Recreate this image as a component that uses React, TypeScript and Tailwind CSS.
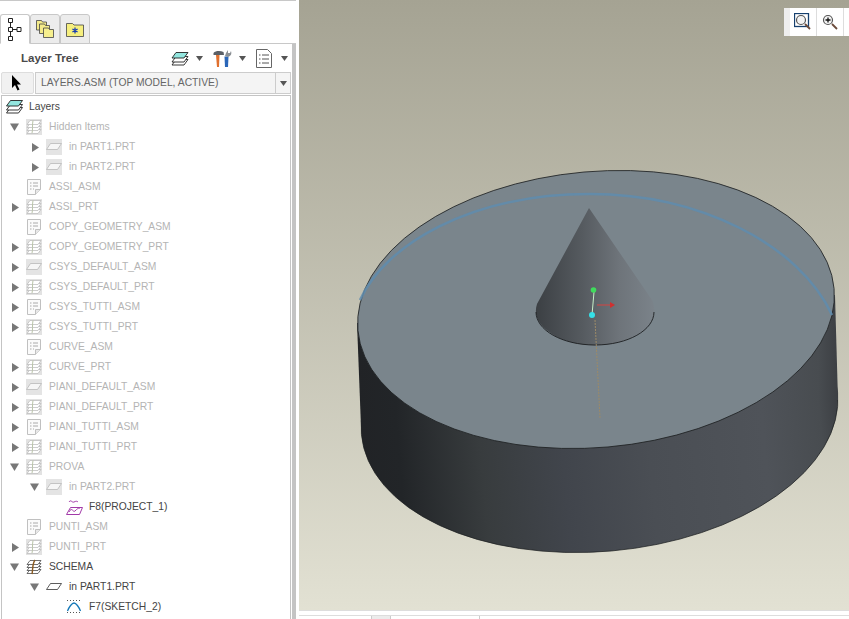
import React from "react";

type Kind = "sheet" | "plane" | "list" | "layers" | "project" | "sketch" | "schema";
type Row = { d: -1 | 0 | 1 | 2; a?: "open" | "closed"; k: Kind; t: string; dim?: boolean };

const rows: Row[] = [
  { d: -1, k: "layers", t: "Layers" },
  { d: 0, a: "open", k: "sheet", t: "Hidden Items", dim: true },
  { d: 1, a: "closed", k: "plane", t: "in PART1.PRT", dim: true },
  { d: 1, a: "closed", k: "plane", t: "in PART2.PRT", dim: true },
  { d: 0, k: "list", t: "ASSI_ASM", dim: true },
  { d: 0, a: "closed", k: "sheet", t: "ASSI_PRT", dim: true },
  { d: 0, k: "list", t: "COPY_GEOMETRY_ASM", dim: true },
  { d: 0, a: "closed", k: "sheet", t: "COPY_GEOMETRY_PRT", dim: true },
  { d: 0, a: "closed", k: "plane", t: "CSYS_DEFAULT_ASM", dim: true },
  { d: 0, a: "closed", k: "sheet", t: "CSYS_DEFAULT_PRT", dim: true },
  { d: 0, a: "closed", k: "list", t: "CSYS_TUTTI_ASM", dim: true },
  { d: 0, a: "closed", k: "sheet", t: "CSYS_TUTTI_PRT", dim: true },
  { d: 0, k: "list", t: "CURVE_ASM", dim: true },
  { d: 0, a: "closed", k: "sheet", t: "CURVE_PRT", dim: true },
  { d: 0, a: "closed", k: "plane", t: "PIANI_DEFAULT_ASM", dim: true },
  { d: 0, a: "closed", k: "sheet", t: "PIANI_DEFAULT_PRT", dim: true },
  { d: 0, a: "closed", k: "list", t: "PIANI_TUTTI_ASM", dim: true },
  { d: 0, a: "closed", k: "sheet", t: "PIANI_TUTTI_PRT", dim: true },
  { d: 0, a: "open", k: "sheet", t: "PROVA", dim: true },
  { d: 1, a: "open", k: "plane", t: "in PART2.PRT", dim: true },
  { d: 2, k: "project", t: "F8(PROJECT_1)" },
  { d: 0, k: "list", t: "PUNTI_ASM", dim: true },
  { d: 0, a: "closed", k: "sheet", t: "PUNTI_PRT", dim: true },
  { d: 0, a: "open", k: "schema", t: "SCHEMA" },
  { d: 1, a: "open", k: "plane", t: "in PART1.PRT" },
  { d: 2, k: "sketch", t: "F7(SKETCH_2)" },
];

const indent: Record<number, string> = { [-1]: "pl-[4px]", 0: "pl-[4px]", 1: "pl-[24px]", 2: "pl-[44px]" };

function Arrow({ a }: { a?: "open" | "closed" }) {
  if (!a) return <span className="w-[20px] shrink-0" />;
  return (
    <svg width="20" height="20" viewBox="0 0 20 20" className="shrink-0">
      {a === "open" ? <path d="M4 6.500h9l-4.500 7.500z" fill="#777" /> : <path d="M6 6l7 4.500-7 4.500z" fill="#777" />}
    </svg>
  );
}

function Stack({ w = 17 }: { w?: number }) {
  return (
    <svg width={w} height="16" viewBox="0 0 17 16">
      <path d="M4.500 8.500h12l-4 5.500H.5z" fill="#fff" stroke="#222" strokeWidth=".9" />
      <path d="M4.500 5.500h12l-4 5.500H.5z" fill="#fff" stroke="#222" strokeWidth=".9" />
      <path d="M4.500 1.500h12l-4 5.500H.5z" fill="#93e6df" stroke="#222" strokeWidth=".9" />
    </svg>
  );
}

function TreeIcon({ k, dim }: { k: Kind; dim?: boolean }) {
  const c = dim ? "#b8b8b8" : "#333";
  if (k === "layers") return <Stack />;
  if (k === "plane")
    return (
      <span className={`flex h-[16px] w-[16px] items-center justify-center ${dim ? "bg-[#e4e4e4]" : ""}`}>
        <svg width="16" height="16" viewBox="0 0 16 16">
          <path d="M4.500 4.500H15.500L11.500 10.500H.5z" fill={dim ? "#f6f6f6" : "#fff"} stroke={c} strokeWidth=".8" />
        </svg>
      </span>
    );
  if (k === "sheet" || k === "schema")
    return (
      <span className={`flex h-[16px] w-[16px] items-center justify-center ${dim ? "bg-[#e2e2e2]" : ""}`}>
        <svg width="16" height="16" viewBox="0 0 16 16">
          <path d="M4 10.500h11l-3 4H1z" fill="#fff" stroke={c} strokeWidth=".7" />
          <path d="M4 7.500h11l-3 4H1z" fill="#fff" stroke={c} strokeWidth=".7" />
          <path d="M4 4.500h11l-3 4H1z" fill="#fff" stroke={c} strokeWidth=".7" />
          <path d="M4 1.500h11l-3 4H1z" fill="#fff" stroke={c} strokeWidth=".7" />
          {k === "schema" ? <path d="M9 1C6 5 7 11 6 15" stroke="#8a5a20" strokeWidth="1.400" fill="none" /> : <path d="M7 1.500C6 6 7 11 6 14" stroke="#b9c4a8" strokeWidth="1" fill="none" />}
        </svg>
      </span>
    );
  if (k === "list")
    return (
      <svg width="16" height="16" viewBox="0 0 16 16">
        <path d="M1.500 .5h13v10l-5 5h-8z" fill="#fbfbfb" stroke="#c0c0c0" />
        <path d="M14.500 10.500h-5v5" fill="#e8e8e8" stroke="#c0c0c0" />
        <path d="M4 4h1.500M7 4h5M4 7h1.500M7 7h5M4 10h1.500M7 10h1" stroke="#aaa" />
      </svg>
    );
  if (k === "project")
    return (
      <svg width="17" height="16" viewBox="0 0 17 16">
        <path d="M3 3c2-3 3 1 5 0s3-1 4 0" fill="none" stroke="#a23aa8" />
        <path d="M4.500 8.500h12l-3 7H.5z" fill="#fff" stroke="#a23aa8" />
        <path d="M3 13c3-6 4 1 6-1s3-3 5-3" fill="none" stroke="#a23aa8" />
      </svg>
    );
  return (
    <svg width="16" height="16" viewBox="0 0 16 16">
      <path d="M1 1.500h14M1 13.500h14" stroke="#555" strokeDasharray="1 2" />
      <path d="M1.500 12C3 8 6 4 8 4s5 4 6.500 8" fill="none" stroke="#1679b8" strokeWidth="1.300" />
    </svg>
  );
}

function TreeRow({ r }: { r: Row }) {
  return (
    <div className={`flex h-[20px] items-center ${indent[r.d]}`}>
      {r.d !== -1 && <Arrow a={r.a} />}
      <span className="flex w-[23px] shrink-0 items-center">
        <TreeIcon k={r.k} dim={r.dim} />
      </span>
      <span className={`whitespace-nowrap ${r.dim ? "text-[#b4b4b4]" : "text-[#444]"}`}>{r.t}</span>
    </div>
  );
}

function Caret() {
  return (
    <svg width="7" height="5" viewBox="0 0 7 5">
      <path d="M0 0h7L3.500 5z" fill="#555" />
    </svg>
  );
}

function Tab({ active, children }: { active?: boolean; children: React.ReactNode }) {
  return (
    <div className={`-mb-px flex h-[30px] w-[30px] items-center justify-center rounded-t-[3px] border border-[#c8c8c8] ${active ? "border-b-white bg-white" : "bg-[#ececec]"}`}>
      {children}
    </div>
  );
}

function Model() {
  return (
    <svg viewBox="299 0 550 610" className="absolute inset-0 h-full w-full">
      <defs>
        <linearGradient id="side" x1="358" x2="838" y1="0" y2="0" gradientUnits="userSpaceOnUse">
          <stop offset="0" stopColor="#212326" />
          <stop offset=".08" stopColor="#222528" />
          <stop offset=".25" stopColor="#383c3e" />
          <stop offset=".42" stopColor="#41454c" />
          <stop offset=".6" stopColor="#4a4e54" />
          <stop offset=".84" stopColor="#4f5359" />
          <stop offset=".96" stopColor="#484c50" />
          <stop offset="1" stopColor="#3c3f43" />
        </linearGradient>
        <linearGradient id="cone" x1="535" x2="655" y1="0" y2="0" gradientUnits="userSpaceOnUse">
          <stop offset="0" stopColor="#3b3f43" />
          <stop offset=".4" stopColor="#565b60" />
          <stop offset=".7" stopColor="#6e747a" />
          <stop offset="1" stopColor="#7b838a" />
        </linearGradient>
      </defs>
      <ellipse cx="599.500" cy="413.500" rx="239" ry="138" transform="rotate(-5 599.500 413.500)" fill="url(#side)" stroke="#1c1e20" strokeWidth=".7" />
      <path d="M357 323L361 427L838 400L835 295Z" fill="url(#side)" />
      <ellipse cx="596" cy="309.500" rx="239" ry="138" transform="rotate(-5 596 309.500)" fill="#7a858c" stroke="#1c1e20" strokeWidth=".8" />
      <path d="M360 300C385 245 470 194 590 194C700 194 800 245 832 315" fill="none" stroke="#5f8cae" strokeWidth="2.500" opacity=".85" />
      <path d="M589 208L537 304C533 316 540 326 552 334C575 349 615 349 638 334C652 325 658 314 652 300Z" fill="url(#cone)" />
      <path d="M536 312C536 330 562 345 595 345S654 330 654 312" fill="none" stroke="#1c1e20" strokeWidth=".9" />
      <path d="M595 320L600 418" stroke="#9c8a68" strokeWidth="1" strokeDasharray="2 1" />
      <path d="M594 292L592 315" stroke="#c8f0c8" strokeWidth="1" />
      <path d="M597 305H611" stroke="#b05050" strokeWidth="1.500" />
      <path d="M610 302L615 305L610 308Z" fill="#d03030" />
      <circle cx="593.500" cy="290" r="2.800" fill="#3fdc5c" />
      <circle cx="592" cy="315" r="3" fill="#35e0e8" />
    </svg>
  );
}

function Zoom({ plus }: { plus?: boolean }) {
  return (
    <svg width="18" height="18" viewBox="0 0 18 18">
      {!plus && <rect x=".5" y=".5" width="14" height="13" fill="none" stroke="#16406e" strokeWidth="1.300" />}
      <circle cx="7" cy="7" r="4.500" fill="#f4f4f4" stroke="#555" strokeWidth="1.200" />
      {plus && <path d="M4.500 7h5M7 4.500v5" stroke="#111" strokeWidth="1.300" />}
      <path d="M11 11l5 5" stroke="#6b4a3a" strokeWidth="1.800" />
    </svg>
  );
}

export default function App() {
  return (
    <div className="flex h-[619px] w-[849px] overflow-hidden bg-white font-['Liberation_Sans',sans-serif] text-[10.3px]">
      <aside className="flex w-[296px] shrink-0 flex-col border-t border-[#c8c8c8]">
        <div className="flex h-[43px] shrink-0 items-end border-b border-[#c8c8c8] pr-[4px]">
          <Tab active>
            <svg width="14" height="24" viewBox="0 0 14 24">
              <path d="M.5 1.500h4v4h-4zM.5 10.500h4v4h-4zM.5 19.500h4v4h-4zM9 10.500h4v4H9zM2.500 5.500v5M2.500 14.500v5M4.500 12.500H9" fill="none" stroke="#222" />
            </svg>
          </Tab>
          <Tab>
            <svg width="20" height="20" viewBox="0 0 20 20">
              <path d="M1.500 1.500h5l1 1.500h4v8h-10z" fill="#f4eb8a" stroke="#444" strokeWidth=".8" />
              <path d="M4.500 5h5l1 1.500h4v8h-10z" fill="#f4eb8a" stroke="#444" strokeWidth=".8" />
              <path d="M8.500 9h5l1 1.500h4v8h-10z" fill="#f6ef8e" stroke="#444" strokeWidth=".8" />
            </svg>
          </Tab>
          <Tab>
            <svg width="18" height="16" viewBox="0 0 18 16">
              <path d="M.5 2.500h6l1.500 1.500h9.500v11.500H.5z" fill="#f6ef7e" stroke="#444" strokeWidth=".8" />
              <path d="M9 6.500v6M6.400 8l5.200 3M11.600 8l-5.200 3" stroke="#1a3fb0" strokeWidth="1.300" />
            </svg>
          </Tab>
        </div>
        <div className="flex min-h-0 flex-1">
          <div className="flex min-w-0 flex-1 flex-col pl-[1px]">
            <div className="flex h-[28px] shrink-0 items-center pl-[20px] pt-[1px]">
              <span className="w-[150px] text-[11.5px] font-bold text-[#4a4a4a]">Layer Tree</span>
              <span className="flex w-[42px] items-center gap-[7px]">
                <Stack w={18} />
                <Caret />
              </span>
              <span className="flex w-[43px] items-center gap-[7px]">
                <svg width="19" height="19" viewBox="0 0 19 19">
                  <path d="M.5 4c2-2.500 7-2.500 10-1l.5 3H.5z" fill="#5a5f66" />
                  <path d="M3 6h3.500l-.5 12H4z" fill="#e0702e" />
                  <path d="M11.500 7.500h4L15 18h-3z" fill="#2a66b8" />
                  <path d="M12 7l1-3 2-3v3l2 0 1-2c1 3 0 5-3 6z" fill="#8a8f94" />
                </svg>
                <Caret />
              </span>
              <span className="flex items-center gap-[9px]">
                <svg width="16" height="19" viewBox="0 0 16 19">
                  <path d="M.5.500h11l4 4v14H.5z" fill="#fff" stroke="#666" />
                  <path d="M3 6h1.500M6 6h7M3 10h1.500M6 10h7M3 14h1.500M6 14h7" stroke="#555" />
                </svg>
                <Caret />
              </span>
            </div>
            <div className="flex h-[22px] shrink-0 gap-[1px]">
              <div className="flex w-[33px] items-center justify-center rounded-[2px] border border-[#ddd] bg-[#f1f1f1]">
                <svg width="10" height="16" viewBox="0 0 10 16" className="ml-[-4px]">
                  <path d="M1 0v13l3-3 2.500 5.500 2-1L6 9.500h4z" fill="#000" />
                </svg>
              </div>
              <div className="flex flex-1 items-center justify-between border border-[#ccc] bg-[#f4f4f4] pl-[5px]">
                <span className="text-[#666]">LAYERS.ASM (TOP MODEL, ACTIVE)</span>
                <span className="flex h-full w-[15px] items-center justify-center border-l border-[#ccc]">
                  <Caret />
                </span>
              </div>
            </div>
            <div className="mt-px min-h-0 flex-1 overflow-hidden border-x border-t border-[#c4c4c4] pt-[1px]">
              {rows.map((r, i) => (
                <TreeRow key={i} r={r} />
              ))}
            </div>
          </div>
          <div className="ml-[1px] w-[4px] shrink-0 bg-[#c4c4c4]" />
        </div>
      </aside>
      <main className="flex min-w-0 flex-1 flex-col pl-[3px]">
        <div className="relative flex-1 bg-gradient-to-b from-[#a5a393] to-[#e2e1d3]">
          <Model />
          <div className="absolute right-0 top-[8px] flex h-[28px] items-center border-l-[6px] border-[#eeeeee] bg-white pr-[5px]">
            <span className="flex h-full w-[27px] items-center justify-center border-r border-[#ddd]">
              <Zoom />
            </span>
            <span className="flex h-full w-[27px] items-center justify-center border-r border-[#ddd]">
              <Zoom plus />
            </span>
          </div>
        </div>
        <div className="h-[9px] shrink-0 border-t border-[#ddd] bg-white">
          <div className="mt-[4px] flex h-[5px] border-t border-[#ddd] pl-[72px]">
            <span className="h-full w-[20px] border-x border-[#ccc] bg-[#ececec]" />
            <span className="ml-[88px] h-full flex-1 border-l border-[#ccc]" />
          </div>
        </div>
      </main>
    </div>
  );
}
